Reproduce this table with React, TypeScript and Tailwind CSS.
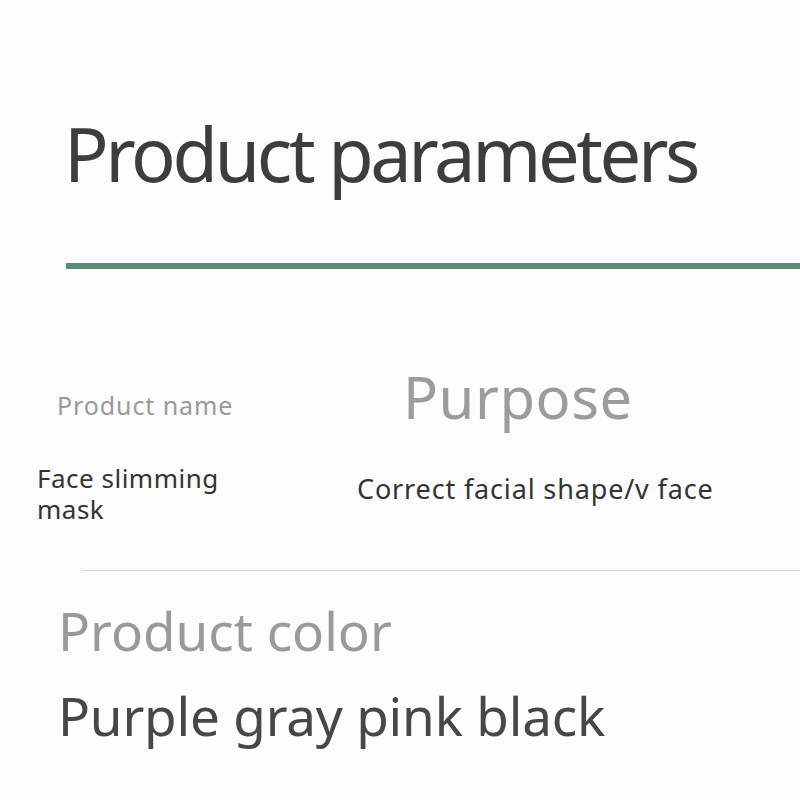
export default function App() {
  return (
    <div className="w-[800px] h-[800px] overflow-hidden bg-[#fdfdfd] font-['Noto_Sans',sans-serif]">
      {/* Title */}
      <div className="pt-[104px] pl-[64px]">
        <h1 className="text-[74px] leading-[100px] text-[#3d3d3d] tracking-[-3.4px]">Product parameters</h1>
      </div>
      <div className="mt-[59px] ml-[66px] h-[6px] bg-[#5e8b74]" />

      {/* Parameter row */}
      <div className="mt-[118px] flex">
        <div className="w-[320px] pl-[37px]">
          <div className="mt-[3px] pl-[20px] text-[25px] leading-[30px] tracking-[0.9px] text-[#9a9a9a]">Product name</div>
          <div className="mt-[43px] text-[26px] leading-[31px] tracking-[0.5px] text-[#333]">
            <div>Face slimming</div>
            <div>mask</div>
          </div>
        </div>
        <div className="pl-[37px]">
          <div className="pl-[46px] text-[58px] leading-[60px] tracking-[0.5px] text-[#9c9c9c] -mt-[20px]">Purpose</div>
          <div className="mt-[46px] text-[27px] leading-[31px] tracking-[0.85px] text-[#333]">Correct facial shape/v face</div>
        </div>
      </div>

      <div className="mt-[45px] ml-[82px] h-px bg-[#d8d8d8]" />

      {/* Color */}
      <div className="pl-[58px] pt-[25px]">
        <div className="text-[53px] leading-[70px] text-[#9a9a9a]">Product color</div>
        <div className="mt-[15px] text-[53px] leading-[70px] tracking-[-0.2px] text-[#474747]">Purple gray pink black</div>
      </div>
    </div>
  )
}
